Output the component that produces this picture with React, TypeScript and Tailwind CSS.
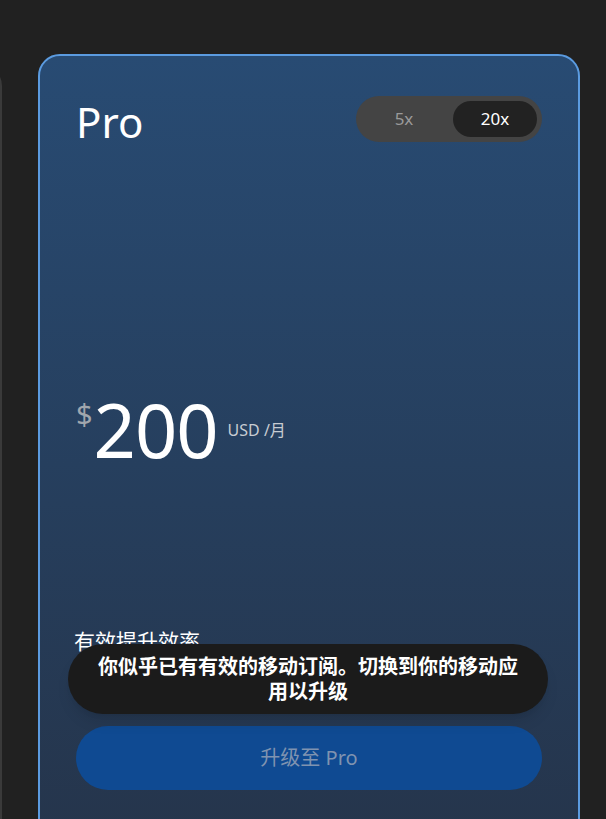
import React, { useState } from 'react';

const font = { fontFamily: '"Noto Sans", "Noto Sans CJK SC", sans-serif' };

const App: React.FC = () => {
  const [tier, setTier] = useState<'5x' | '20x'>('20x');

  return (
    <div className="w-[606px] h-[819px] overflow-hidden bg-[#212121] text-white" style={font}>
      <div className="flex items-start gap-[36px] pt-[54px]">
        {/* neighbour card, mostly off screen */}
        <div className="shrink-0 w-[300px] h-[800px] ml-[-298px] mt-[10px] rounded-[22px] border-2 border-[#3a3a3a]" />

        {/* Pro card */}
        <div className="relative shrink-0 w-[542px] h-[820px] rounded-[22px] border-2 border-[#5b9be0] bg-gradient-to-b from-[#284b73] via-[#263f5e] to-[#25344a] px-[36px] pt-[40px]">
          <div className="flex items-start justify-between">
            <h2 className="text-[42px] leading-none pt-[5px] font-normal">Pro</h2>
            <div className="flex items-center h-[46px] w-[186px] rounded-full bg-[#444444] p-[5px]">
              <button
                onClick={() => setTier('5x')}
                className={`flex-1 h-full rounded-full text-[17px] pr-[6px] ${tier === '5x' ? 'bg-[#222222] text-white' : 'text-[#9a9a9a]'}`}
              >
                5x
              </button>
              <button
                onClick={() => setTier('20x')}
                className={`w-[84px] h-full rounded-full text-[17px] ${tier === '20x' ? 'bg-[#222222] text-white' : 'text-[#9a9a9a]'}`}
              >
                20x
              </button>
            </div>
          </div>

          <div className="flex items-start mt-[250px]">
            <span className="text-[29px] leading-none text-[#a0a6ad] mt-[6px]">$</span>
            <span className="text-[74px] leading-none ml-[1px] tracking-[-1px]">200</span>
            <span className="text-[16px] text-[#c8ccd2] ml-[10px] mt-[25px]">USD /月</span>
          </div>

          <p className="mt-[164px] text-[21px] leading-none ml-[-2px]">有效提升效率</p>

          <button className="mt-[74px] w-full h-[64px] rounded-full bg-[#0f4a92] text-[20px] text-[#7f93b0]">
            升级至 Pro
          </button>

          {/* toast */}
          <div className="absolute left-[28px] top-[588px] w-[480px] h-[70px] rounded-full bg-[#1b1b1b] flex items-center justify-center px-[22px] shadow-lg">
            <p className="text-center text-[20px] leading-[25px] font-bold">
              你似乎已有有效的移动订阅。切换到你的移动应用以升级
            </p>
          </div>
        </div>
      </div>
    </div>
  );
};

export default App;
